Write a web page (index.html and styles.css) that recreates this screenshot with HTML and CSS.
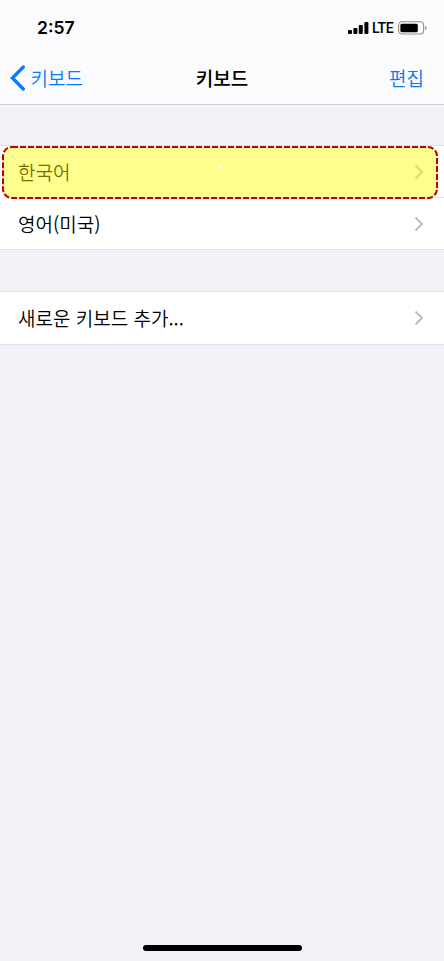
FILE: index.html
```html
<!DOCTYPE html>
<html lang="ko">
<head>
<meta charset="utf-8">
<title>키보드</title>
<link rel="stylesheet" href="styles.css">
</head>
<body>
<div class="screen">
  <header class="header">
    <div class="status">
      <span class="time">2:57</span>
      <div class="indicators">
        <svg width="21" height="14" viewBox="0 0 21 14"><rect x="0" y="9" width="4" height="4" rx="1"/><rect x="5.4" y="7" width="4" height="6" rx="1"/><rect x="10.8" y="4" width="4" height="9" rx="1"/><rect x="16.4" y="1" width="4" height="12" rx="1"/></svg>
        <span class="lte">LTE</span>
        <svg width="30" height="14" viewBox="0 0 30 14"><rect x=".6" y=".8" width="25" height="12.2" rx="3.4" fill="none" stroke="#8f8f91" stroke-width="1.1"/><rect x="2.4" y="2.7" width="17.4" height="8.5" rx="1.5"/><path d="M27.2 4.8c2 .8 2 3.5 0 4.3z" fill="#8f8f91"/></svg>
      </div>
    </div>
    <nav class="nav">
      <a class="back"><svg width="16" height="26" viewBox="0 0 16 26"><path d="M13.3 2L2.4 13l10.9 11" fill="none" stroke="#087aff" stroke-width="3.3" stroke-linecap="round" stroke-linejoin="miter"/></svg><span>키보드</span></a>
      <h1 class="title">키보드</h1>
      <a class="edit">편집</a>
    </nav>
  </header>
  <main>
    <section class="group">
      <div class="row"><span>한국어</span><svg class="chevron" viewBox="0 0 10 16"><path d="M1.5 1.5L8 8l-6.5 6.5"/></svg>
        <svg class="marker" width="444" height="56" viewBox="0 0 444 56"><rect x="3" y="3" width="434" height="51" rx="9" fill="#ff0" fill-opacity=".44" stroke="#c00000" stroke-width="2" stroke-dasharray="6 2"/><path d="M217.5 20.5l3.5 4" stroke="#fff" stroke-width="1.5"/></svg>
      </div>
      <div class="row"><span>영어(미국)</span><svg class="chevron" viewBox="0 0 10 16"><path d="M1.5 1.5L8 8l-6.5 6.5"/></svg></div>
    </section>
    <section class="group">
      <div class="row add"><span>새로운 키보드 추가...</span><svg class="chevron" viewBox="0 0 10 16"><path d="M1.5 1.5L8 8l-6.5 6.5"/></svg></div>
    </section>
  </main>
  <div class="home"></div>
</div>
</body>
</html>
```
FILE: styles.css
```css
* { box-sizing: border-box; }
body { margin: 0; font-family: Inter, "Noto Sans CJK KR", sans-serif; color: #111; background: #f2f1f8; }
.screen { width: 444px; height: 961px; display: flex; flex-direction: column; background: #f2f1f8; overflow: hidden; }
.header { height: 105px; background: #fbfbfd; border-bottom: 1px solid #d0d0d4; }
.status { height: 52px; padding: 4px 16px 0 37px; display: flex; align-items: center; justify-content: space-between; color: #000; }
.time { font-size: 17.5px; font-weight: 600; line-height: 24px; }
.indicators { display: flex; align-items: center; }
.lte { width: 21px; margin: 0 5px 0 3px; font-family: Roboto, sans-serif; font-size: 14px; font-weight: 500; letter-spacing: -.3px; line-height: 14px; }
.nav { height: 52px; padding: 0 20px 0 10px; display: grid; grid-template-columns: 1fr auto 1fr; align-items: center; font-family: "Noto Sans CJK KR", sans-serif; font-weight: 350; font-size: 19px; line-height: 28px; }
.back { display: flex; align-items: center; gap: 4.5px; color: #087af5; }
.title { margin: 0 0 0 10px; font-size: 19px; font-weight: 500; line-height: 28px; color: #000; }
.edit { justify-self: end; color: #087af5; }
.group { margin-top: 41px; background: #fff; border-top: 1px solid #e2e1e6; border-bottom: 1px solid #e2e1e6; }
.group:first-child { margin-top: 40px; }
.row { position: relative; height: 51px; padding: 0 20px 0 18px; display: flex; align-items: center; justify-content: space-between; font-family: "Noto Sans CJK KR", sans-serif; font-size: 19px; font-weight: 350; line-height: 28px; color: #000; }
.row + .row { height: 52px; padding-top: 2px; }
.row + .row::before { content: ""; position: absolute; top: 0; left: 18px; right: 0; height: 1px; background: #e2e1e6; }
.row.add { height: 52px; }
.chevron { width: 10px; height: 16px; fill: none; stroke: #bdbdc0; stroke-width: 2; }
.marker { position: absolute; left: 0; top: -2px; z-index: 1; }
.home { width: 159px; height: 6px; margin: auto auto 10px; border-radius: 3px; background: #000; }
```
